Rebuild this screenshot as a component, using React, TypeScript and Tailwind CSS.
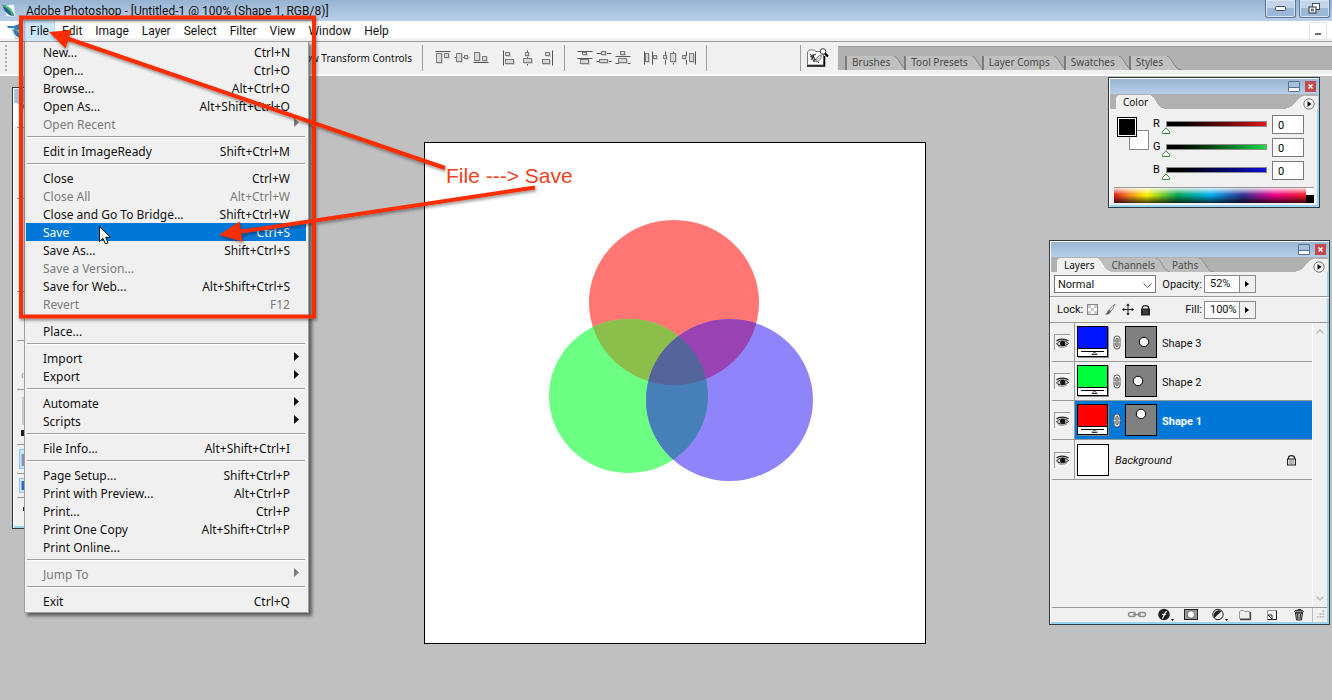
import React, { useState } from "react";

type Entry = { label: string; keys?: string; off?: boolean; sub?: boolean };

const FILE_MENU: Entry[][] = [
  [
    { label: "New...", keys: "Ctrl+N" },
    { label: "Open...", keys: "Ctrl+O" },
    { label: "Browse...", keys: "Alt+Ctrl+O" },
    { label: "Open As...", keys: "Alt+Shift+Ctrl+O" },
    { label: "Open Recent", off: true, sub: true },
  ],
  [{ label: "Edit in ImageReady", keys: "Shift+Ctrl+M" }],
  [
    { label: "Close", keys: "Ctrl+W" },
    { label: "Close All", keys: "Alt+Ctrl+W", off: true },
    { label: "Close and Go To Bridge...", keys: "Shift+Ctrl+W" },
    { label: "Save", keys: "Ctrl+S" },
    { label: "Save As...", keys: "Shift+Ctrl+S" },
    { label: "Save a Version...", off: true },
    { label: "Save for Web...", keys: "Alt+Shift+Ctrl+S" },
    { label: "Revert", keys: "F12", off: true },
  ],
  [{ label: "Place..." }],
  [
    { label: "Import", sub: true },
    { label: "Export", sub: true },
  ],
  [
    { label: "Automate", sub: true },
    { label: "Scripts", sub: true },
  ],
  [{ label: "File Info...", keys: "Alt+Shift+Ctrl+I" }],
  [
    { label: "Page Setup...", keys: "Shift+Ctrl+P" },
    { label: "Print with Preview...", keys: "Alt+Ctrl+P" },
    { label: "Print...", keys: "Ctrl+P" },
    { label: "Print One Copy", keys: "Alt+Shift+Ctrl+P" },
    { label: "Print Online..." },
  ],
  [{ label: "Jump To", off: true, sub: true }],
  [{ label: "Exit", keys: "Ctrl+Q" }],
];

function FileMenu() {
  return (
    <div
      role="menu"
      className="absolute left-0 top-full z-20 w-[285px] border border-[#a0a0a0] bg-[#f0f0f0] pb-[2px] pl-px pr-[2px] pt-px font-['Noto_Sans',sans-serif] shadow-[3px_3px_3px_rgba(0,0,0,0.5)]"
    >
      {FILE_MENU.map((group, i) => (
        <div key={i}>
          {i > 0 && (
            <div className="flex h-[9px] items-start px-px pt-[3px]">
              <div className="h-[2px] w-full border-b border-t border-b-white border-t-[#a0a0a0]" />
            </div>
          )}
          {group.map((e) => (
            <button
              key={e.label}
              role="menuitem"
              className={
                "flex h-[18px] w-full items-center justify-between pl-[17px] pt-[2px] text-[12px] leading-[16px] " +
                (e.sub ? "pr-[7px] " : "pr-4 ") +
                (e.label === "Save" ? "bg-[#0078d7] text-white" : e.off ? "text-[#7a7a7a]" : "text-[#111]")
              }
            >
              <span>{e.label}</span>
              {e.keys && <span>{e.keys}</span>}
              {e.sub && (
                <svg width="5" height="9" viewBox="0 0 5 9" className="mb-[6px]">
                  <path d="M0 0l5 4.500L0 9z" fill="currentColor" />
                </svg>
              )}
            </button>
          ))}
        </div>
      ))}
    </div>
  );
}

function Feather({ className }: { className: string }) {
  return (
    <svg viewBox="0 0 16 16" className={className}>
      <path d="M3 2.500 L13 1.500 L14.500 14 L5 13.500z" fill="#f4fbff" stroke="#9cc3dc" strokeWidth=".6" />
      <path d="M1.500 2c5-.5 10 4 11.500 11-5 .3-10-4-11.500-11z" fill="#1d5f94" />
      <path d="M2 2.500c4.500 1 8 5 10.500 10" fill="none" stroke="#4fb356" strokeWidth="1.800" />
      <path d="M5 3c3 1 5 3 6.500 6" fill="none" stroke="#8fd3f0" strokeWidth=".8" />
    </svg>
  );
}

function TitleBar() {
  return (
    <header className="flex h-[21px] items-center bg-linear-to-b from-[#97b3d1] to-[#b9d0ea] pr-[2px]">
      <Feather className="ml-px size-4" />
      <h1 className="ml-[9px] flex-1 whitespace-nowrap text-[12px] leading-[18px] text-[#111]">
        Adobe Photoshop - [Untitled-1 @ 100% (Shape 1, RGB/8)]
      </h1>
      <div className="flex gap-[3px] self-start">
        <button
          aria-label="Minimize"
          className="flex h-[18px] w-[31px] items-center justify-center rounded-b-[3px] border border-t-0 border-[#5d7794] bg-linear-to-b from-[#c2d5ea] from-50% to-[#9db8d6] to-50% shadow-[inset_0_0_0_1px_#d6e4f3]"
        >
          <svg width="11" height="5" viewBox="0 0 11 5">
            <rect x=".5" y=".5" width="10" height="4" rx="1" fill="#fff" stroke="#444c5c" />
          </svg>
        </button>
        <button
          aria-label="Restore"
          className="flex h-[18px] w-[31px] items-center justify-center rounded-b-[3px] border border-t-0 border-[#5d7794] bg-linear-to-b from-[#c2d5ea] from-50% to-[#9db8d6] to-50% shadow-[inset_0_0_0_1px_#d6e4f3]"
        >
          <svg width="13" height="11" viewBox="0 0 13 11">
            <rect x="4.500" y=".5" width="7" height="6" fill="#fff" stroke="#444c5c" />
            <rect x="1" y="4" width="7" height="6" fill="#fff" stroke="#444c5c" strokeWidth="1.200" />
            <rect x="3.500" y="6" width="2" height="2" fill="#8fa9c8" stroke="#444c5c" strokeWidth=".7" />
          </svg>
        </button>
      </div>
    </header>
  );
}

function MenuBar() {
  return (
    <nav className="flex h-5 items-stretch bg-linear-to-b from-white from-85% to-[#f0f0f0] to-90% text-[12px] leading-[18px] text-[#111]">
      <div className="flex w-6 items-center pl-[7px]">
        <svg width="16" height="17" viewBox="0 0 16 17">
          <path d="M4 4l12-3v14l-7 1z" fill="#e9f4fa" stroke="#9cb8c8" strokeWidth=".7" />
          <path d="M0 3h7l5-2v6L7 9V5H1z" fill="#2b83b5" />
          <path d="M6 6c5 0 8 4 9 9-5 0-8-3-9-9z" fill="#2c79ac" />
          <path d="M7 6c3 1 6 4 7 8" stroke="#6bc2a1" fill="none" />
        </svg>
      </div>
      <div className="relative flex">
        <button className="w-[31px] border-x border-[#b5dcf8] bg-[#cce8ff] text-center">File</button>
        <FileMenu />
      </div>
      {["Edit", "Image", "Layer", "Select", "Filter", "View", "Window", "Help"].map((m) => (
        <button key={m} className="pl-[7px] pr-[6px]">
          {m}
        </button>
      ))}
      <div className="ml-auto flex pr-[5px] pt-px">
        <button aria-label="Minimize document" className="flex h-[18px] w-[18px] items-center justify-center border border-[#e2e2e2] bg-white">
          <span className="mt-[6px] h-[2px] w-[6px] bg-[#707070]" />
        </button>
      </div>
    </nav>
  );
}

/* Each alignment icon is a list of guide lines and plates on a 16x16 grid. */
type Align = { name: string; lines: number[][]; boxes: number[][] };
const ALIGN: Align[][] = [
  [
    { name: "Align top edges", lines: [[0, 1, 15, 1]], boxes: [[1, 3, 6, 10], [9, 3, 5, 5]] },
    { name: "Align vertical centers", lines: [[0, 7, 15, 7]], boxes: [[2, 3, 6, 9], [10, 5, 4, 4]] },
    { name: "Align bottom edges", lines: [[0, 12, 15, 12]], boxes: [[1, 2, 6, 9], [9, 6, 5, 5]] },
  ],
  [
    { name: "Align left edges", lines: [[2, 0, 2, 15]], boxes: [[4, 2, 5, 4], [4, 9, 9, 5]] },
    { name: "Align horizontal centers", lines: [[7, 0, 7, 15]], boxes: [[5, 2, 4, 4], [3, 8, 9, 5]] },
    { name: "Align right edges", lines: [[13, 0, 13, 15]], boxes: [[6, 2, 5, 4], [3, 9, 8, 5]] },
  ],
  [
    { name: "Distribute top edges", lines: [[0, 1, 15, 1], [0, 8, 15, 8]], boxes: [[5, 2, 5, 3], [3, 9, 9, 5]] },
    { name: "Distribute vertical centers", lines: [[0, 3, 15, 3], [0, 11, 15, 11]], boxes: [[5, 1, 5, 4], [3, 9, 9, 4]] },
    { name: "Distribute bottom edges", lines: [[0, 6, 15, 6], [0, 13, 15, 13]], boxes: [[5, 1, 5, 4], [3, 8, 9, 5]] },
  ],
  [
    { name: "Distribute left edges", lines: [[1, 1, 1, 14], [9, 1, 9, 14]], boxes: [[2, 3, 4, 9], [10, 5, 4, 4]] },
    { name: "Distribute horizontal centers", lines: [[3, 1, 3, 14], [11, 1, 11, 14]], boxes: [[1, 5, 4, 4], [8, 3, 6, 9]] },
    { name: "Distribute right edges", lines: [[5, 1, 5, 14], [14, 1, 14, 14]], boxes: [[1, 5, 4, 4], [8, 3, 5, 9]] },
  ],
];

function AlignGroup({ items }: { items: Align[] }) {
  return (
    <div className="flex">
      {items.map((a) => (
        <button key={a.name} aria-label={a.name} className="flex w-[19px] items-center justify-center">
          <svg width="16" height="16" viewBox="0 0 16 16">
            {a.lines.map((l, i) => (
              <path key={i} d={`M${l[0] + 0.5} ${l[1] + 0.5}L${l[2] + 0.5} ${l[3] + 0.5}`} stroke="#555" />
            ))}
            {a.boxes.map((b, i) => (
              <g key={i}>
                <rect x={b[0] + 1} y={b[1] + 1} width={b[2]} height={b[3]} fill="#cfcfcf" />
                <rect x={b[0] + 0.5} y={b[1] + 0.5} width={b[2] - 1} height={b[3] - 1} fill="#d8d8d8" stroke="#7d7d7d" />
              </g>
            ))}
          </svg>
        </button>
      ))}
    </div>
  );
}

const Divider = () => <div className="my-[2px] w-px bg-[#a0a0a0]" />;

function WellTab({ label }: { label: string }) {
  return (
    <button className="flex h-[14px] items-stretch border-l-2 border-[#7b7b7b] bg-[#c0c0c0] pl-[5px] text-[10px] leading-[13px] text-[#4a4a4a]">
      {label}
      <svg width="20" height="14" viewBox="0 0 20 14" className="-mr-[6px]">
        <path d="M4 0c5 1 7 14 15 14H20V0z" fill="#b0b0b0" />
        <path d="M4 0c5 1 7 14 15 14" fill="none" stroke="#808080" />
      </svg>
    </button>
  );
}

function OptionsBar() {
  return (
    <div className="flex h-[35px] items-stretch border-b-2 border-t border-b-white border-t-[#999] bg-[#f0f0f0] py-px font-['Noto_Sans',sans-serif]">
      <div className="my-[2px] ml-[5px] w-[3px] border-l-2 border-dotted border-[#b0b0b0]" />
      <label className="flex w-[404px] items-center justify-end gap-1 whitespace-nowrap text-[10px] text-[#111]">
        <input type="checkbox" className="size-3" />
        Show Transform Controls
      </label>
      <div className="w-[10px]" />
      <Divider />
      <div className="flex gap-[9px] pl-[10px] pr-2">
        <AlignGroup items={ALIGN[0]} />
        <AlignGroup items={ALIGN[1]} />
      </div>
      <Divider />
      <div className="flex gap-[9px] pl-[10px] pr-2">
        <AlignGroup items={ALIGN[2]} />
        <AlignGroup items={ALIGN[3]} />
      </div>
      <Divider />
      <div className="w-[93px]" />
      <Divider />
      <button aria-label="Go to Bridge" className="flex w-[34px] items-center justify-center border-r border-white">
        <svg width="23" height="20" viewBox="0 0 23 20">
          <path d="M1.500 17V4l2-2h5l1 1.500h8V17z" fill="#fff" stroke="#777" />
          <path d="M1 18h17.500V8" fill="none" stroke="#000" strokeWidth="1.500" />
          <path d="M4 6l9 9M5 12l3-5M4 9l6-3M5 7l3 7M7 6l2 8" stroke="#333" fill="none" />
          <path d="M10 14c0-4 3-7 5-7 1 3-1 6-5 7z" fill="#ddd" stroke="#555" strokeWidth=".8" />
          <circle cx="17" cy="3.500" r="2.800" fill="#fff" stroke="#333" />
          <path d="M19 5.500l3 3" stroke="#000" strokeWidth="2.200" />
        </svg>
      </button>
      <div className="my-[3px] ml-[3px] flex min-w-0 flex-1 items-end border-t border-[#999] bg-[#b0b0b0] pl-[7px]">
        {["Brushes", "Tool Presets", "Layer Comps", "Swatches", "Styles"].map((t) => (
          <WellTab key={t} label={t} />
        ))}
      </div>
    </div>
  );
}

function PanelFrame({ className, children }: { className: string; children: React.ReactNode }) {
  return (
    <section
      className={"absolute flex flex-col border border-[#2c3a44] bg-[#f0f0f0] shadow-[inset_1px_1px_0_#fff,inset_-2px_-2px_0_#9bd3ee] " + className}
    >
      <div className="mx-px mt-px flex h-[15px] items-center justify-end gap-[5px] bg-linear-to-b from-[#9ab5d2] to-[#b7cee8] pr-[2px]">
        <button aria-label="Collapse panel" className="flex h-[11px] w-[12px] items-end rounded-[1px] border border-[#5c738f] bg-[#a9c0dc]">
          <span className="h-[4px] w-full border-t border-[#5c738f] bg-white" />
        </button>
        <button aria-label="Close panel" className="flex size-[11px] items-center justify-center bg-[#c14b4f]">
          <svg width="5" height="5" viewBox="0 0 5 5">
            <path d="M.5 .5l4 4M4.500 .5l-4 4" stroke="#fff" strokeWidth="1.400" />
          </svg>
        </button>
      </div>
      {children}
    </section>
  );
}

function PanelTabs({ tabs, first }: { tabs: string[]; first: string }) {
  return (
    <div className="relative mx-px flex h-[15px] items-end bg-[#b0b0b0] pl-[6px] font-['Noto_Sans',sans-serif] text-[10px] leading-[15px]">
      {tabs.map((t, i) => (
        <button
          key={t}
          className={
            "flex h-[14px] items-stretch whitespace-nowrap rounded-tl-[4px] " +
            (t === first ? "bg-[#f0f0f0] pl-[7px] text-[#111]" : "bg-[#bdbdbd] pl-[2px] text-[#4c4c4c]")
          }
        >
          {t}
          <svg width="17" height="14" viewBox="0 0 17 14" className={i < tabs.length - 1 ? "-mr-[13px]" : ""}>
            <path d="M0 0c7 0 8 14 16 14h1V0z" fill={i < tabs.length - 1 ? "#bdbdbd" : "#b0b0b0"} />
            <path d="M0 0c7 0 8 14 16 14" fill="none" stroke={t === first ? "#fff" : "#909090"} />
          </svg>
          {i < tabs.length - 1 && <span className="w-[11px]" />}
        </button>
      ))}
      <svg width="32" height="15" viewBox="0 0 32 15" className="ml-auto">
        <path d="M0 15C10 14 10 3 20 2H32V15z" fill="#f0f0f0" />
        <path d="M0 15C10 14 10 3 20 2" fill="none" stroke="#fff" />
      </svg>
      <button aria-label="Panel menu" className="absolute right-[3px] top-[4px]">
        <svg width="12" height="12" viewBox="0 0 12 12">
          <circle cx="6" cy="6" r="5.200" fill="#f4f4f4" stroke="#777" />
          <path d="M4.500 3l4 3-4 3z" fill="#111" />
        </svg>
      </button>
    </div>
  );
}

function ChannelSlider({ label, track }: { label: string; track: string }) {
  const [value, setValue] = useState(0);
  return (
    <div className="flex h-[23px] items-center">
      <label htmlFor={"ch-" + label} className="mb-px w-[13px] text-[11px] leading-[14px]">
        {label}
      </label>
      <div className="relative mr-[5px] h-[18px] w-[101px] pt-[5px]">
        <div className={"h-[6px] border border-[#8c8c8c] bg-linear-to-r " + track} />
        <svg width="9" height="7" viewBox="0 0 9 7" className="absolute top-[11px] -translate-x-1/2" style={{ left: `${(value / 255) * 100}%` }}>
          <path d="M4.500 .8L8.300 5v1.500H.7V5z" fill="#fff" stroke="#3c8a3c" />
        </svg>
        <input
          id={"ch-" + label}
          type="range"
          min={0}
          max={255}
          value={value}
          onChange={(e) => setValue(Number(e.target.value))}
          className="absolute inset-0 w-full opacity-0"
        />
      </div>
      <input
        aria-label={label + " value"}
        value={value}
        onChange={(e) => setValue(Math.min(255, Number(e.target.value) || 0))}
        className="h-[19px] w-[32px] border border-[#7a7a7a] bg-white pl-[5px] pt-px text-[11px]"
      />
    </div>
  );
}

function ColorPanel() {
  return (
    <PanelFrame className="right-[12px] top-px h-[131px] w-[212px]">
      <PanelTabs tabs={["Color"]} first="Color" />
      <div className="flex pt-[4px]">
        <div className="relative ml-2 w-[36px]">
          <button aria-label="Background color" className="absolute left-[12px] top-[17px] size-[20px] border border-[#8a8a8a] bg-white" />
          <button aria-label="Foreground color" className="absolute left-0 top-[4px] size-[20px] border border-black bg-black shadow-[inset_0_0_0_1px_#fff]" />
        </div>
        <div>
          <ChannelSlider label="R" track="from-black to-[#e01717]" />
          <ChannelSlider label="G" track="from-black to-[#17e045]" />
          <ChannelSlider label="B" track="from-black to-[#1010d8]" />
        </div>
      </div>
      <div className="mx-[5px] mb-[4px] mt-auto flex h-[16px] border-t border-[#999]">
        <div className="flex-1 bg-[linear-gradient(to_bottom,rgba(255,255,255,0.85),rgba(255,255,255,0)_45%,rgba(0,0,0,0)_50%,rgba(0,0,0,0.75)),linear-gradient(to_right,#e0161f,#f58a1f_8%,#fff200_17%,#00a651_33%,#00aeef_50%,#2e3192_67%,#ec008c_83%,#ed1c24)]" />
        <div className="w-2 bg-linear-to-b from-white from-50% to-black to-50%" />
      </div>
    </PanelFrame>
  );
}

function Eye() {
  return (
    <svg width="13" height="10" viewBox="0 0 13 10">
      <path d="M.5 3C3 .5 9 .3 12.500 3" fill="none" stroke="#222" strokeWidth="1.200" />
      <path d="M.5 6C3 2 9.500 2 12.500 5.500 9.500 8.500 3 8.800 .5 6z" fill="#ccc" stroke="#222" />
      <circle cx="6.700" cy="5.300" r="2.600" fill="#111" />
      <path d="M2 8.500c3 1.500 6 1 9-.5" fill="none" stroke="#777" strokeWidth=".8" />
    </svg>
  );
}

function Chain() {
  return (
    <svg width="8" height="15" viewBox="0 0 8 15">
      <rect x="1" y="1" width="6" height="13" rx="2.800" fill="#eee" stroke="#555" />
      <rect x="3" y="3.500" width="2" height="8" rx="1" fill="#fff" stroke="#222" strokeWidth=".9" />
      <path d="M.5 7.500h2M5.500 7.500h2" stroke="#ddd" />
    </svg>
  );
}

type ShapeLayer = { name: string; fill: string; dot: [number, number] };
const LAYERS: ShapeLayer[] = [
  { name: "Shape 3", fill: "#0014ff", dot: [19, 16] },
  { name: "Shape 2", fill: "#00ff3c", dot: [13, 16] },
  { name: "Shape 1", fill: "#ff0000", dot: [16, 10] },
];

function EyeCell() {
  return (
    <button
      aria-label="Toggle visibility"
      className="ml-[2px] flex size-4 items-center justify-center border-l border-t border-[#999] bg-[#f4f4f4]"
    >
      <Eye />
    </button>
  );
}

function LayerRow({ layer }: { layer: ShapeLayer }) {
  const active = layer.name === "Shape 1";
  return (
    <li className="flex h-[39px] items-stretch border-b border-[#999]">
      <div className="flex w-[23px] items-center border-r border-[#999]">
        <EyeCell />
      </div>
      <div className={"flex flex-1 items-center pl-[2px] " + (active ? "bg-[#0078d7] text-white" : "text-[#111]")}>
        <svg width="32" height="32" viewBox="0 0 32 32">
          <rect x="1" y="1" width="31" height="31" fill="#888" />
          <rect x=".5" y=".5" width="30" height="30" fill="#fff" stroke="#000" />
          <rect x="1" y="1" width="29" height="21" fill={layer.fill} />
          <path d="M0 22.500h31M4 25.500h23" stroke="#000" />
          <path d="M15 28.500l2.500-2.500 2.500 2.500z" fill="#fff" stroke="#000" strokeWidth=".8" />
        </svg>
        <span className="mx-[4px]">
          <Chain />
        </span>
        <svg width="32" height="32" viewBox="0 0 32 32">
          <rect x=".5" y=".5" width="31" height="31" fill="#808080" stroke="#000" />
          <circle cx={layer.dot[0]} cy={layer.dot[1]} r="4.700" fill="#fff" stroke="#000" />
        </svg>
        <span className={"ml-[5px] mt-1 " + (active ? "font-bold" : "")}>{layer.name}</span>
      </div>
    </li>
  );
}

function Stepper({ id, value }: { id: string; value: string }) {
  return (
    <div className="flex h-[18px] border border-[#8a8a8a]">
      <input id={id} defaultValue={value} className="w-[34px] bg-white pl-[5px] pt-px text-[11px]" />
      <button aria-label="Open slider" className="flex w-[16px] items-center justify-center border-l border-[#8a8a8a] pr-[2px]">
        <svg width="4" height="6" viewBox="0 0 4 6">
          <path d="M0 0l4 3-4 3z" fill="#000" />
        </svg>
      </button>
    </div>
  );
}

function Padlock({ solid }: { solid?: boolean }) {
  return (
    <svg width="11" height="12" viewBox="0 0 11 12">
      <path d="M2.500 5V3.500C2.500 1 8.500 1 8.500 3.500V5" fill="none" stroke="#222" strokeWidth="1.300" />
      <rect x="1.500" y="5" width="8" height="6" fill={solid ? "#222" : "#ddd"} stroke="#222" />
      <path d="M3 7h5M3 9h5" stroke={solid ? "#666" : "#777"} strokeWidth=".8" />
    </svg>
  );
}

function LayersPanel() {
  return (
    <PanelFrame className="right-[2px] top-[164px] h-[385px] w-[281px] text-[11px] text-[#111]">
      <PanelTabs tabs={["Layers", "Channels", "Paths"]} first="Layers" />
      <div className="flex h-[25px] items-center border-b border-[#999] pl-1 shadow-[0_1px_0_#fff]">
        <div className="relative w-[102px]">
          <select aria-label="Blend mode" className="h-[18px] w-full appearance-none border border-[#7a7a7a] bg-white pl-[3px] pt-px text-[11px] leading-[15px]">
            <option>Normal</option>
          </select>
          <svg width="9" height="5" viewBox="0 0 9 5" className="pointer-events-none absolute right-[4px] top-[8px]">
            <path d="M.5 .5l4 4 4-4" fill="none" stroke="#555" />
          </svg>
        </div>
        <label htmlFor="opacity" className="w-[48px] pr-[2px] pt-[2px] text-right">
          Opacity:
        </label>
        <Stepper id="opacity" value="52%" />
      </div>
      <div className="flex h-[26px] items-center border-b border-[#999] pl-[7px]">
        <span className="w-[27px] pt-[2px]">Lock:</span>
        <div className="ml-[3px] flex items-center gap-[6px]">
          <button aria-label="Lock transparent pixels">
            <svg width="11" height="11" viewBox="0 0 11 11">
              <rect x=".5" y=".5" width="10" height="10" fill="#fff" stroke="#888" />
              <path d="M1 1h3v3H1zM7 1h3v3H7zM4 4h3v3H4zM1 7h3v3H1zM7 7h3v3H7z" fill="#ccc" />
            </svg>
          </button>
          <button aria-label="Lock image pixels">
            <svg width="12" height="13" viewBox="0 0 13 13">
              <path d="M12 .5L7 5 5.500 7.500 7 8.500 9 7z" fill="#ddd" stroke="#777" strokeWidth=".8" />
              <path d="M6 7c-3 0-2 4-5.500 5 4 .5 7-1 7-4z" fill="#666" />
            </svg>
          </button>
          <button aria-label="Lock position">
            <svg width="12" height="13" viewBox="0 0 13 13">
              <path d="M6.500 2v9M2 6.500h9" stroke="#111" />
              <path d="M6.500 0l2 2.500h-4zM6.500 13l2-2.500h-4zM0 6.500l2.500-2v4zM13 6.500l-2.500-2v4z" fill="#111" />
            </svg>
          </button>
          <button aria-label="Lock all">
            <Padlock solid />
          </button>
        </div>
        <label htmlFor="fill" className="ml-auto pr-[2px] pt-[2px]">
          Fill:
        </label>
        <div className="mr-[73px]">
          <Stepper id="fill" value="100%" />
        </div>
      </div>
      <div className="flex flex-1">
        <ul className="ml-[2px] flex-1">
          {LAYERS.map((l) => (
            <LayerRow key={l.name} layer={l} />
          ))}
          <li className="flex h-[40px] items-stretch border-b border-[#999]">
            <div className="flex w-[23px] items-center border-r border-[#999]">
              <EyeCell />
            </div>
            <div className="flex flex-1 items-center pl-[2px] pr-[15px]">
              <div className="size-8 border border-black bg-white" />
              <span className="ml-[6px] mt-1 flex-1 italic">Background</span>
              <Padlock />
            </div>
          </li>
        </ul>
        <div className="mr-[2px] flex w-[15px] flex-col items-center justify-between border-l border-white py-[6px]">
          <svg width="8" height="5" viewBox="0 0 8 5">
            <path d="M.5 4.500L4 1l3.500 3.500" fill="none" stroke="#bbb" strokeWidth="1.500" />
          </svg>
          <svg width="8" height="5" viewBox="0 0 8 5">
            <path d="M.5 .5L4 4 7.500 .5" fill="none" stroke="#bbb" strokeWidth="1.500" />
          </svg>
        </div>
      </div>
      <div className="mx-[2px] mb-[2px] flex h-[15px] items-center border-t border-[#999]">
        <div className="ml-auto flex items-center">
          {FOOTER.map(([name, art]) => (
            <button key={name} aria-label={name} className="flex w-[27px] justify-center">
              <svg width="20" height="14" viewBox="0 0 20 14">
                {art}
              </svg>
            </button>
          ))}
        </div>
        <svg width="15" height="14" viewBox="0 0 15 14" className="border-l border-[#bbb]">
          <path d="M10 2h2v2h-2zM7 5h2v2H7zM10 5h2v2h-2zM4 8h2v2H4zM7 8h2v2H7zM10 8h2v2h-2z" fill="#bbb" />
        </svg>
      </div>
    </PanelFrame>
  );
}

const FOOTER: [string, React.ReactNode][] = [
  [
    "Link layers",
    <g key="a" fill="none" stroke="#8a8a8a" strokeWidth="1.400">
      <rect x="1.500" y="4.500" width="7" height="4" rx="2" />
      <rect x="11.500" y="4.500" width="7" height="4" rx="2" />
      <path d="M6 6.500h8" />
    </g>,
  ],
  [
    "Layer style",
    <g key="b">
      <circle cx="10" cy="6.500" r="5.800" fill="#222" />
      <path d="M8 10.500c2 0 2-7 5-7M8 6.500h4" fill="none" stroke="#fff" strokeWidth="1.200" />
      <path d="M17 11h3l-1.500 2z" fill="#000" />
    </g>,
  ],
  [
    "Layer mask",
    <g key="c">
      <rect x="3.500" y="1.500" width="13" height="10" fill="#999" stroke="#222" />
      <circle cx="10" cy="6.500" r="3.700" fill="#fff" stroke="#444" strokeWidth=".7" />
    </g>,
  ],
  [
    "Adjustment layer",
    <g key="d">
      <circle cx="10" cy="6.500" r="5.200" fill="#eee" stroke="#222" />
      <path d="M6.400 10A5.200 5.200 0 0 1 13.600 3z" fill="#222" />
      <path d="M17 11h3l-1.500 2z" fill="#000" />
    </g>,
  ],
  [
    "New group",
    <g key="e">
      <path d="M5 11.500h10.500V4" fill="none" stroke="#444" strokeWidth="1.300" />
      <path d="M4.500 10.500v-7l1-1h3l1 1h5v7z" fill="#eee" stroke="#999" />
    </g>,
  ],
  [
    "New layer",
    <g key="f">
      <path d="M5.500 2.500h9v9h-9z" fill="#eee" stroke="#999" />
      <path d="M14.500 2.500v9h-9" fill="none" stroke="#222" />
      <path d="M6 7h4v4z" fill="#fff" stroke="#222" />
    </g>,
  ],
  [
    "Delete layer",
    <g key="g">
      <path d="M6.500 5h7l-1 7h-5z" fill="#bbb" stroke="#222" />
      <path d="M8.500 6l.5 5M11.500 6l-.5 5" stroke="#222" />
      <ellipse cx="10" cy="3.500" rx="4.500" ry="1.500" fill="#888" stroke="#222" />
      <path d="M9 1.500h3" stroke="#222" />
    </g>,
  ],
];

function ToolPalette() {
  return (
    <section aria-label="Tools" className="absolute left-[12px] top-[11px] h-[442px] w-[40px] border border-[#2c3a44] bg-[#f0f0f0] shadow-[inset_1px_1px_0_#fff,inset_0_-2px_0_#9bd3ee]">
      <svg width="14" height="438" viewBox="0 0 14 438">
        <rect x="1" y="1" width="13" height="14" fill="#aac3de" />
        <path d="M1 15l9 0 0 8 4 2V38H1z" fill="#fff" />
        <path d="M3 15l5 2 6 8v-8z" fill="#7c7f99" />
        <path d="M4 39.500h10M4 110.500h10M4 203.500h10M4 252.500h10M4 301.500h10M4 356.500h10M4 385.500h10M4 409.500h10" stroke="#999" />
        <rect x="6.500" y="361.500" width="8" height="19" fill="#cce4f7" stroke="#92c4e8" />
        <rect x="8.500" y="366" width="6" height="12" fill="#8795ab" />
        <rect x="6.500" y="390.500" width="8" height="14" fill="#cce4f7" stroke="#92c4e8" />
        <rect x="8.500" y="393" width="6" height="9" fill="#2d6cc0" />
        <rect x="9" y="309" width="4" height="28" fill="#ccc" />
        <path d="M8 342h3v6H8zM10 419h1v4h-1z" fill="#222" />
        <path d="M10 285q-2 3 0 5" stroke="#999" fill="none" />
      </svg>
    </section>
  );
}

function Artboard() {
  return (
    <main className="absolute left-[424px] top-[66px] size-[502px] border border-black bg-white">
      <svg width="500" height="500" viewBox="425 143 500 500">
        <defs>
          <clipPath id="r">
            <ellipse cx="674" cy="302.500" rx="85" ry="82.500" />
          </clipPath>
          <clipPath id="g">
            <ellipse cx="628.500" cy="396" rx="79.500" ry="77" />
          </clipPath>
        </defs>
        <ellipse cx="674" cy="302.500" rx="85" ry="82.500" fill="#ff7672" />
        <ellipse cx="628.500" cy="396" rx="79.500" ry="77" fill="#6cff84" />
        <ellipse cx="729.500" cy="400" rx="83.500" ry="81" fill="#8f84f9" />
        <ellipse cx="628.500" cy="396" rx="79.500" ry="77" fill="#8bbf4a" clipPath="url(#r)" />
        <ellipse cx="729.500" cy="400" rx="83.500" ry="81" fill="#9842b4" clipPath="url(#r)" />
        <g clipPath="url(#g)">
          <ellipse cx="729.500" cy="400" rx="83.500" ry="81" fill="#4780b8" />
          <ellipse cx="729.500" cy="400" rx="83.500" ry="81" fill="#54639a" clipPath="url(#r)" />
        </g>
      </svg>
    </main>
  );
}

function Annotations() {
  return (
    <div className="pointer-events-none absolute left-0 top-0 z-30">
      <svg width="600" height="340" viewBox="0 0 600 340">
        <defs>
          <filter id="drop" x="-10%" y="-10%" width="120%" height="130%">
            <feDropShadow dx="1" dy="2" stdDeviation="1.500" floodColor="#000" floodOpacity=".4" />
          </filter>
        </defs>
        <g filter="url(#drop)" fill="#fa2d06" stroke="#fa2d06">
          <rect x="21" y="17.500" width="293" height="299" fill="none" strokeWidth="4" />
          <path d="M445 168L66 38" strokeWidth="4" />
          <path d="M49 32l22.500-2-6 18.500z" stroke="none" />
          <path d="M535 187.500L238 232" strokeWidth="4" />
          <path d="M219 235l20.500-13.500 3 20z" stroke="none" />
        </g>
        <path d="M99.500 226.500v15l3.500-3.200 2.400 5.600 2.600-1.100-2.400-5.500h4.700z" fill="#fff" stroke="#111" strokeLinejoin="round" />
      </svg>
      <p className="absolute left-[446px] top-[163px] whitespace-nowrap font-['Liberation_Sans',sans-serif] text-[21px] leading-[26px] text-[#f0401e]">
        File ---&gt; Save
      </p>
    </div>
  );
}

export default function App() {
  return (
    <div className="relative flex min-h-screen flex-col overflow-hidden bg-[#c0c0c0] font-[Roboto,sans-serif]">
      <TitleBar />
      <MenuBar />
      <OptionsBar />
      <div className="relative min-h-[560px] flex-1">
        <ToolPalette />
        <Artboard />
        <ColorPanel />
        <LayersPanel />
      </div>
      <Annotations />
    </div>
  );
}
